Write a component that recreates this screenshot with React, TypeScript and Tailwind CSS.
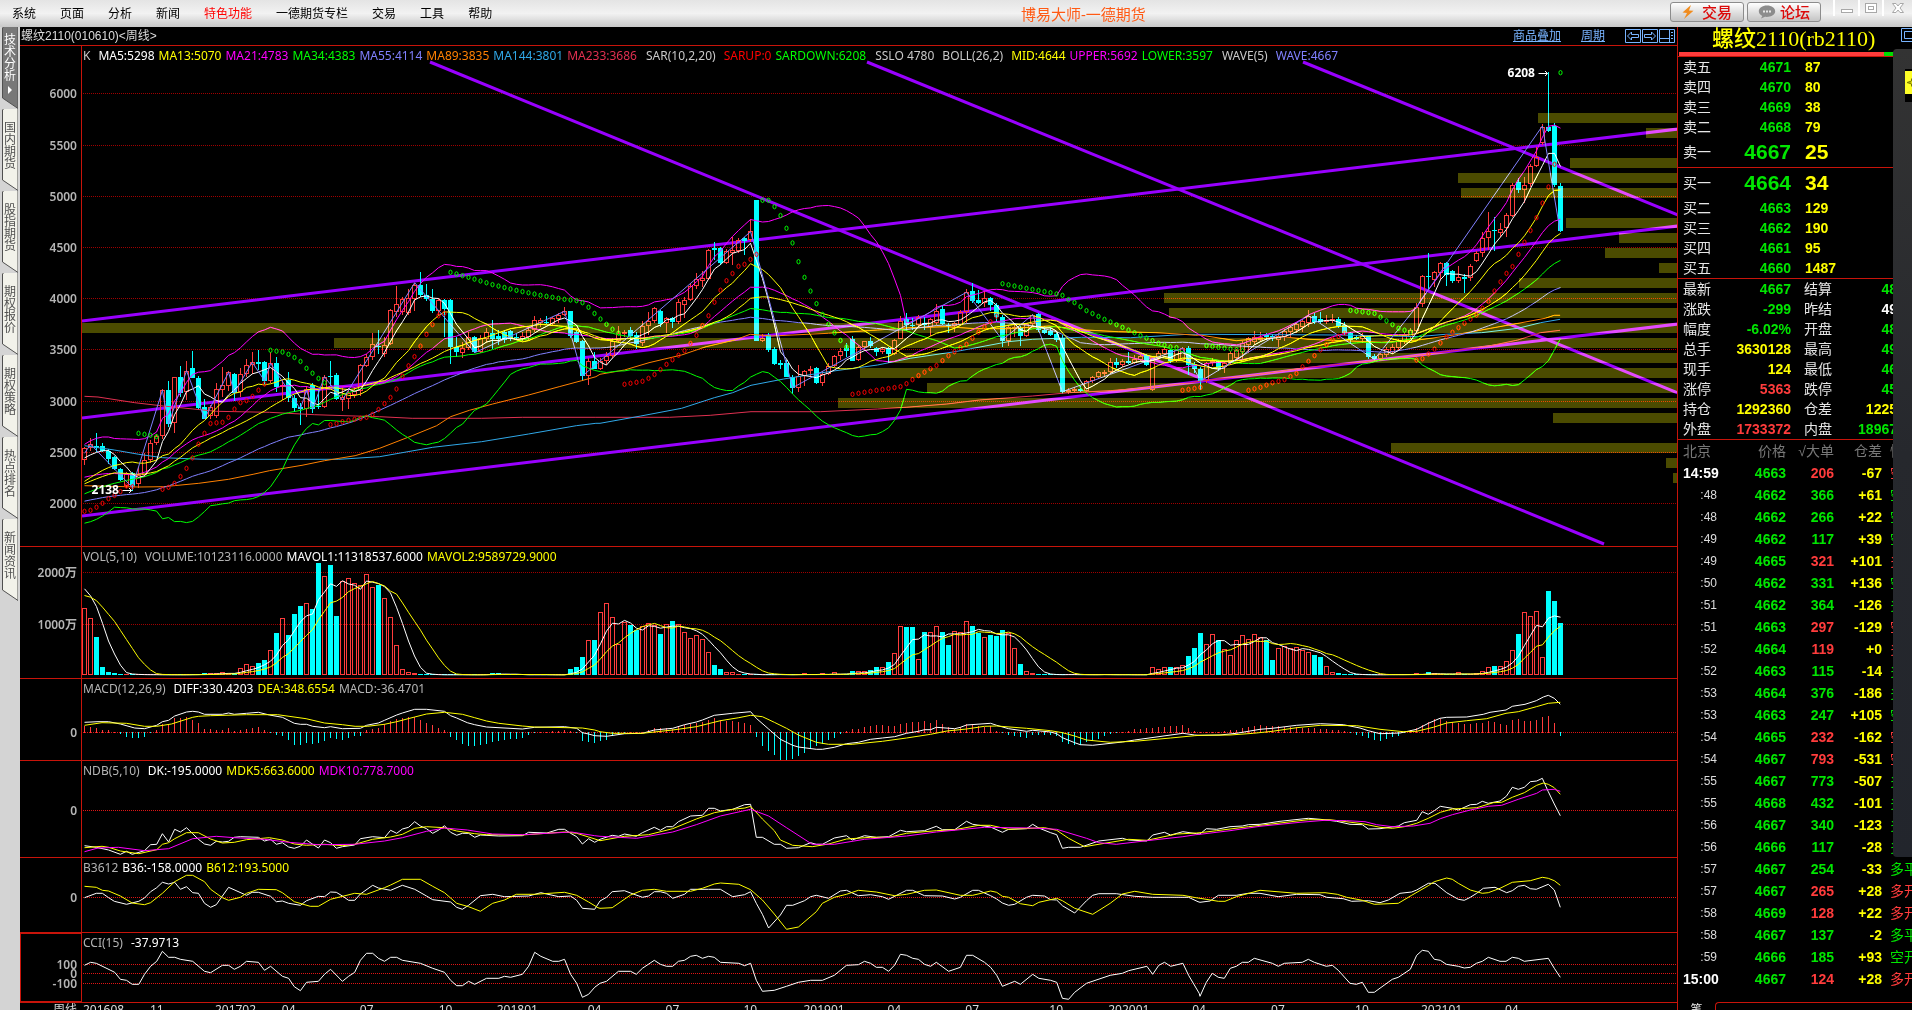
import { useState } from "react";
import type { ReactNode } from "react";

type Point = [number, number];

const menuItems = [
  { label: "系统" },
  { label: "页面" },
  { label: "分析" },
  { label: "新闻" },
  { label: "特色功能", hot: true },
  { label: "一德期货专栏" },
  { label: "交易" },
  { label: "工具" },
  { label: "帮助" },
];

const sideTabs = ["技术分析", "国内期货", "股指期货", "期权报价", "期权策略", "热点排名", "新闻资讯"];

// ---------------------------------------------------------------------------
// Series data
// ---------------------------------------------------------------------------

// Candles: direction (r = up, d = down), body top, body bottom, high, low.
// Values are thirds of a pixel below y = 280, negative ones lie above it.
const candleData = `
r,505,541,500,555 r,493,503,473,513 d,498,503,458,517 d,498,514,490,516 d,514,536,508,553 d,531,566,528,570
d,567,599,565,604 r,583,618,575,625 d,578,622,576,632 r,584,611,560,625 r,541,584,520,590 r,490,541,480,550
r,469,490,463,496 r,331,469,326,478 d,331,432,303,440 r,292,428,290,458 d,291,338,258,352 r,272,335,243,360
d,265,293,212,295 d,293,383,288,388 d,381,416,357,418 r,381,407,375,416 r,328,407,308,413 r,316,330,262,350
r,277,318,273,332 d,281,338,279,362 r,283,336,265,352 r,254,283,238,292 r,247,254,215,282 d,246,252,210,270
d,246,302,242,312 r,250,302,216,310 d,249,320,232,336 r,315,322,300,361 d,300,353,276,365 d,353,383,345,397
d,382,387,370,434 r,327,388,317,410 d,315,386,308,398 d,378,382,330,386 r,290,380,286,383 d,287,290,243,318
d,285,357,279,360 r,350,360,320,394 r,340,357,325,387 r,330,345,320,355 r,256,332,253,348 r,232,258,222,262
r,193,232,160,240 d,198,202,150,222 r,195,223,170,230 r,91,192,86,195 r,73,95,18,110 r,58,95,52,104
r,55,100,28,106 r,15,58,8,92 d,14,45,-25,52 d,45,56,13,64 d,57,93,27,100 r,61,93,55,105
d,60,88,56,170 d,60,200,56,251 d,200,216,170,231 r,203,218,186,235 r,172,203,155,210 d,171,217,168,218
r,175,217,165,219 r,157,178,143,190 d,158,176,120,206 d,168,178,150,195 d,155,180,150,188 d,153,176,150,184
d,170,174,160,180 r,168,176,155,184 r,150,170,140,180 r,121,150,108,155 r,120,130,113,140 d,125,130,108,133
r,115,132,112,135 r,104,118,98,128 r,94,104,82,108 d,94,168,92,173 d,157,186,150,188 d,183,288,180,303
r,244,288,235,314 d,243,266,215,268 r,243,266,233,270 r,228,243,215,255 r,182,228,175,235 r,158,182,138,190
r,155,162,150,170 d,150,168,140,180 d,165,192,155,208 r,137,190,122,198 r,122,137,95,165 r,85,123,82,130
d,93,131,90,140 r,115,130,110,160 d,115,125,110,143 r,67,125,57,133 r,61,75,50,115 r,17,60,10,62
r,-3,17,-22,28 r,-7,3,-28,20 r,-89,-4,-92,0 d,-95,-90,-113,-60 d,-96,-50,-100,-45 r,-87,-52,-92,-48
r,-90,-82,-130,-45 r,-120,-87,-125,-80 d,-126,-117,-130,-75 r,-146,-120,-182,-115 d,-240,182,-240,182 r,173,182,163,186
d,165,209,160,215 d,208,252,200,254 d,249,254,240,268 d,250,290,240,290 d,290,323,285,343 r,287,323,255,335
r,273,287,270,318 r,267,273,258,290 d,265,308,262,312 r,282,310,272,318 r,257,283,250,286 r,227,258,225,262
r,213,227,205,240 d,205,212,190,230 d,178,242,168,244 r,200,240,195,243 r,184,200,182,214 d,183,197,170,205
d,205,215,200,227 r,207,215,200,222 d,205,221,200,250 r,181,221,176,225 r,122,176,108,178 d,118,136,100,153
d,134,138,115,150 r,112,135,105,142 d,130,136,110,150 r,118,140,114,168 r,92,130,72,134 d,87,131,75,134
d,135,139,130,158 r,130,137,125,155 r,97,135,90,138 r,37,97,27,128 d,34,63,9,70 d,60,68,30,73
r,55,70,33,80 d,54,75,50,93 d,76,110,70,125 d,110,183,105,200 r,140,184,135,197 r,140,146,130,170
d,143,167,138,197 r,133,167,128,172 r,104,133,102,138 d,102,151,99,155 d,150,158,138,162 d,152,164,145,168
d,163,180,160,185 d,173,335,165,343 r,330,335,325,343 r,327,331,322,335 d,327,333,318,335 r,303,332,300,335
r,292,303,288,308 r,277,292,272,298 r,275,280,270,290 r,246,275,235,280 d,246,255,233,263 r,244,255,238,262
d,243,248,216,252 r,237,249,225,252 r,228,240,222,244 d,225,255,222,258 r,232,330,227,333 r,218,235,212,240
r,208,222,200,226 d,210,242,206,248 r,210,242,206,246 r,205,240,202,244 d,204,254,198,285 d,253,268,245,278
d,267,303,262,330 r,250,303,246,308 r,243,250,235,258 d,243,263,240,272 r,250,262,246,280 r,220,250,214,256
r,210,235,206,240 r,190,215,182,240 r,175,195,170,220 r,170,185,152,196 r,172,180,155,186 d,165,172,160,180
d,168,175,162,182 r,168,180,160,200 r,153,172,148,184 r,140,155,134,172 r,132,150,126,160 r,122,140,116,156
r,107,128,90,140 d,107,125,100,132 d,118,125,95,130 r,120,125,105,132 r,118,124,103,130 d,118,137,110,145
d,135,160,125,165 d,158,180,155,188 d,170,176,165,180 r,166,178,160,190 d,168,230,165,238 d,228,238,222,242
r,222,236,218,240 r,208,225,202,232 r,200,215,192,222 r,182,205,176,212 r,165,185,160,192 r,150,170,145,176
r,80,152,70,156 r,-11,73,-14,80 d,-12,-8,-80,30 r,-24,0,-28,20 r,-50,-22,-55,0 d,-50,-15,-54,18
d,-26,2,-30,10 r,-8,2,-42,10 d,-8,-4,-18,38 r,-43,-5,-48,4 r,-80,-56,-86,-54 r,-127,-80,-145,-70
r,-147,-125,-203,-90 d,-150,-147,-190,-88 r,-152,-140,-172,-130 r,-195,-157,-200,-130 r,-286,-193,-290,-188 d,-295,-270,-305,-262
r,-285,-270,-310,-230 r,-343,-288,-348,-280 r,-370,-343,-400,-338 r,-460,-412,-468,-405 d,-460,-448,-623,-445 d,-463,-285,-472,-280
d,-282,-147,-290,-145`;

const candles = candleData
  .trim()
  .split(/\s+/)
  .map((row) => {
    const [dir, top, bottom, high, low] = row.split(",");
    return { up: dir === "r", top: +top, bottom: +bottom, high: +high, low: +low };
  });

const barX = (i: number) => 82 + i * 6;
const priceY = (v: number) => 280 + v / 3;

// Volume bars, thirds of a pixel above the base line, one per candle
const volumeData = `
200 170 114 24 9 5 3 3 3 2 2 2 3 2 2 2 2 3 3 3 5 5 6 8 7 5 20 32 27 36 45 74 126 170 120 183 207 215 198 336 296 330 177
281 290 276 269 302 263 270 230 173 89 17 8 5 2 2 2 2 2 2 2 2 2 2 3 3 6 6 3 2 2 2 2 2 2 2 2 2 2 18 24 54 104 105 188 215
173 92 158 150 136 147 155 149 123 152 162 152 128 110 119 107 68 29 17 8 8 2 3 2 3 2 2 3 3 2 2 3 5 3 2 5 2 8 3 4 12 11 11 15
24 23 39 65 146 144 144 47 129 128 146 129 90 131 128 161 147 125 113 120 117 135 125 80 33 11 5 2 2 3 3 2 3 2 2 3 2 3 3 2 2
2 3 2 2 2 23 17 23 24 23 29 57 80 126 92 122 105 77 59 104 119 107 122 113 105 45 80 86 80 83 75 68 60 54 26 8 5
3 3 2 2 2 2 2 3 3 3 3 3 5 3 9 5 3 3 3 8 4 3 5 11 23 27 26 41 74 123 188 176 191 53 252 222 156`;

const volumes = volumeData.trim().split(/\s+/).map(Number);

// Bars before the first visible one, used only to start the averages
const priorCloses = [
  ...Array(21).fill(698),
  ...Array(8).fill(737),
  ...Array(5).fill(694),
  ...Array(8).fill(569),
  ...Array(8).fill(647),
  ...Array(4).fill(539),
];
const priorVolumes = [...Array(5).fill(220), ...Array(4).fill(275)];

const closes = candles.map((c) => (c.up ? c.top : c.bottom));

function average(values: number[], prior: number[], n: number) {
  const all = [...prior, ...values];
  return values.map((_, i) => {
    const end = prior.length + i + 1;
    const part = all.slice(Math.max(0, end - n), end);
    return part.reduce((a, b) => a + b, 0) / part.length;
  });
}

function deviation(values: number[], prior: number[], n: number) {
  const all = [...prior, ...values];
  const mean = average(values, prior, n);
  return values.map((_, i) => {
    const end = prior.length + i + 1;
    const part = all.slice(Math.max(0, end - n), end);
    return Math.sqrt(part.reduce((a, b) => a + (b - mean[i]) ** 2, 0) / part.length);
  });
}

const bollMid = average(closes, priorCloses, 26);
const bollDev = deviation(closes, priorCloses, 26);

// Long series are kept in strips: x origin, y origin, units per px across, units per px down
const strips: Record<string, number[]> = {
  B: [0, 280, 2.45, 3],
  C: [0, 540, 2.45, 3],
  E: [600, 280, 2.45, 3],
  G: [1200, 280, 2.202, 3],
  I: [600, 560, 2.45, 3],
  J: [1200, 560, 3, 3],
};

function trace(data: string): Point[] {
  return data.split("|").flatMap((part) => {
    const [name, ...pairs] = part.trim().split(/\s+/);
    const [x0, y0, sx, sy] = strips[name];
    return pairs.map((pair): Point => {
      const [x, y] = pair.split(",").map(Number);
      return [x0 + x / sx, y0 + y / sy];
    });
  });
}

function valueAt(points: Point[], x: number) {
  if (x <= points[0][0]) return points[0][1];
  for (let i = 1; i < points.length; i++) {
    const [x1, y1] = points[i - 1];
    const [x2, y2] = points[i];
    if (x <= x2) return x2 === x1 ? y2 : y1 + ((y2 - y1) * (x - x1)) / (x2 - x1);
  }
  return points[points.length - 1][1];
}

const ma89 = trace(
  "B 207,617 340,621 400,620 487,610 560,598 620,583 660,572 740,556 795,542 870,527 930,505 1010,467 1070,437 1104,410 1150,391 1207,372 1295,345 1370,320 1425,302 1460,290 | E 0,283 60,270 120,248 200,225 260,200 330,180 368,163 420,168 560,160 680,150 760,143 850,140 920,146 1000,146 1100,138 1190,150 1270,155 1360,158 1430,163 1460,166 | G 0,165 80,182 180,170 240,178 400,187 480,180 560,165 640,145 720,125 760,115 780,106 793,106"
);
const ma144 = trace(
  "B 207,497 280,510 340,523 398,533 500,538 700,538 830,538 930,530 1060,502 1180,485 1295,462 1412,437 1460,430 | E 0,430 100,408 200,385 280,353 325,338 370,316 450,297 560,275 680,255 760,235 870,215 1000,185 1060,178 1180,172 1300,173 1440,163 1460,163 | G 0,163 300,165 400,167 480,170 540,163 620,158 700,145 750,128 793,118"
);
const ma233 = trace(
  "B 207,349 240,351 330,368 400,378 530,394 660,397 770,404 870,408 930,410 1010,415 1180,415 1280,412 1460,412 | E 0,412 170,412 270,406 370,395 540,395 680,387 750,382 850,372 930,360 1060,348 1150,338 1250,332 1350,322 1450,308 | G 0,303 120,285 240,262 400,240 560,212 640,197 700,180 750,158 793,151"
);
const wave = trace(
  "B 207,520 222,493 324,622 398,331 413,432 457,272 501,416 560,277 574,338 618,247 648,302 663,250 736,387 751,330 766,386 795,290 839,360 1016,8 1163,218 1383,94 1427,288 | E 75,165 369,-145 472,323 898,37 986,180 1060,104 1133,335 1427,205 1472,303 | G 239,107 384,238 477,80 754,-462 793,-147"
);

const sarRuns = [
  { up: true, data: "B 207,694 222,691 236,682 251,670 266,656 281,646 295,635 310,618 324,620" },
  { up: false, data: "B 339,460 354,463 369,466 384,470" },
  { up: true, data: "B 398,628 413,622 427,611 442,590 457,565 472,533 486,493 501,460 516,430 545,427 560,412 574,388 589,368 604,362 618,350 633,331 648,312" },
  { up: false, data: "B 663,211 692,216 707,223 721,232 736,244 751,265 766,280 780,295 795,308" },
  { up: true, data: "B 810,434 824,431 839,425 854,421 898,412 913,403 927,389 942,371 957,352 972,326 986,289 1001,257 1016,229 1030,199 1045,163 1060,133 1075,106 1089,100" },
  { up: false, data: "B 1104,-23 1148,-8 1207,14 1265,31 1325,46 1383,58 1413,62 1427,68 1442,82 1457,101 1472,118 1486,133 1501,148 1516,160" },
  { up: true, data: "E 60,313 104,304 119,295 133,284 148,269 163,253 192,226 207,212 222,190 236,167 251,137 266,107 280,68 295,31 310,2 325,-20 339,-41 354,-47 369,-62 383,-77" },
  { up: false, data: "E 398,-239 413,-239 427,-221 442,-194 457,-155 472,-110 486,-56 501,-8 516,34 530,70 545,103 560,133 574,158 589,181 604,201" },
  { up: true, data: "E 618,343 677,331 736,320 751,311 780,287 810,266 824,257 854,227 883,203 898,193 927,157 957,125 972,108" },
  { up: false, data: "E 986,11 1045,25 1104,38 1133,46 1148,59 1163,68 1192,92 1236,118 1280,142 1325,167 1369,190 1398,201 1413,203" },
  { up: true, data: "E 1427,331 1472,322" },
  { up: false, data: "G 15,197 94,212" },
  { up: true, data: "G 107,331 133,322 160,308 186,299 213,280 226,260 239,244 265,210 292,178 318,160" },
  { up: false, data: "G 331,91 384,100 410,122 437,145 464,156" },
  { up: true, data: "G 477,240 490,236 516,208 543,170 582,130 609,105 622,85 635,65 648,34 662,5 675,-20 688,-40 701,-76 714,-112 728,-149 741,-187 754,-230 767,-277 780,-347" },
  { up: false, data: "G 793,-622" },
];

const sarDots = sarRuns.flatMap(({ up, data }) => {
  const points = trace(data);
  const first = Math.round((points[0][0] - 84.5) / 6);
  const last = Math.round((points[points.length - 1][0] - 84.5) / 6);
  return Array.from({ length: last - first + 1 }, (_, k) => {
    const x = 84.5 + (first + k) * 6;
    return { x, y: valueAt(points, x), up };
  });
});

const diff = trace(
  "C 207,547 240,545 266,545 295,552 330,564 354,566 384,556 398,545 413,541 428,528 457,516 472,514 486,516 501,523 545,523 560,519 574,523 604,520 633,517 660,525 692,532 721,550 736,553 751,553 766,559 795,563 810,560 839,566 883,565 898,556 927,549 942,541 972,525 986,519 1016,508 1045,508 1089,514 1104,527 1119,534 1145,548 1163,554 1192,561 1280,567 1310,562 1383,560 1413,565 1427,578 1442,582 1457,587 | I 16,529 60,521 104,520 133,510 178,505 207,494 236,486 251,480 280,466 325,460 369,455 383,475 413,507 442,538 472,556 486,561 530,568 545,568 574,562 604,551 633,547 663,538 692,534 722,530 751,520 780,514 795,509 810,509 824,502 869,506 883,502 898,495 957,490 972,496 1001,506 1045,514 1060,511 1104,516 1119,521 1133,533 1163,548 1177,554 1207,556 1280,546 1310,540 1428,520 1457,525 | J 0,526 60,525 109,520 145,514 180,508 217,505 290,496 361,491 430,494 480,504 505,512 540,521 600,519 650,508 685,490 720,475 740,472 800,471 850,463 870,457 918,450 937,439 975,433 1009,422 1030,411 1045,406 1063,415 1081,433"
);
const dea = trace(
  "C 207,556 250,548 310,550 354,559 384,559 420,552 472,532 486,529 516,527 604,524 680,524 750,536 795,549 839,554 870,559 900,559 942,553 972,545 1016,531 1045,522 1089,517 1133,523 1163,533 1192,543 1222,550 1280,558 1310,561 1427,564 1457,570 | I 0,515 30,520 104,520 178,510 236,500 295,482 340,473 369,466 398,470 427,487 457,505 486,525 530,547 560,553 618,553 692,544 751,534 810,523 850,513 898,507 942,499 972,498 1045,505 1104,512 1133,518 1163,528 1192,540 1250,547 1310,544 1398,534 1457,527 | J 0,526 90,525 160,520 217,514 290,503 361,496 470,497 540,508 610,515 650,514 700,502 740,489 800,482 860,476 918,460 955,455 1009,440 1045,430 1081,427"
);

const dk = trace(
  "C 207,917 236,922 266,930 295,943 310,934 324,943 354,932 369,914 384,913 398,881 413,906 428,868 442,876 457,863 472,881 486,898 501,912 516,916 530,904 545,906 560,904 574,892 589,890 633,892 648,903 663,898 677,913 692,908 707,921 721,925 736,919 751,900 766,913 780,924 795,900 810,908 824,925 839,920 869,915 883,896 913,890 942,893 957,871 972,880 986,867 1001,862 1016,845 1030,858 1045,866 1060,880 1075,870 1089,857 1104,877 1119,886 1133,880 1148,880 1163,892 1177,885 1222,888 1280,887 1295,877 1340,879 1369,868 1383,868 1398,880 1413,890 1427,912 1442,896 1457,907 | I 0,838 30,826 45,829 60,822 89,829 104,818 133,802 148,811 163,800 178,800 192,785 222,768 251,766 266,745 280,745 295,753 325,748 354,734 369,733 383,832 398,832 427,853 442,853 457,865 486,863 516,848 530,853 545,853 574,834 604,827 618,840 648,827 677,832 707,830 736,811 751,815 795,812 824,799 839,809 869,809 898,784 913,793 957,801 986,817 1001,808 1045,806 1060,793 1075,804 1104,818 1119,824 1133,865 1148,862 1177,862 1222,843 1280,835 1295,840 1340,843 1354,825 1383,817 1398,825 1428,815 1462,821 | J 0,822 19,806 50,808 90,800 127,798 145,794 180,793 240,784 325,775 361,778 410,784 450,793 487,794 505,807 540,806 595,798 613,788 650,781 667,755 685,763 703,752 721,739 757,745 775,750 811,734 830,733 847,724 865,730 900,723 919,709 937,682 955,688 973,682 991,665 1010,663 1027,655 1045,695 1063,732 1081,767"
);
const mdk5 = trace(
  "C 207,923 250,919 266,922 295,933 340,941 384,929 398,913 413,908 428,896 457,878 486,878 516,897 545,909 574,907 604,899 660,893 692,900 721,912 751,916 795,913 840,917 869,913 913,898 957,891 986,883 1016,865 1045,860 1089,863 1119,873 1163,881 1192,884 1280,885 1325,881 1383,876 1413,880 1442,891 1465,900 | I 0,842 60,829 119,824 178,806 236,777 280,758 325,748 355,744 369,739 398,777 427,812 442,840 472,856 520,860 560,852 604,837 663,832 707,832 751,820 824,812 869,809 928,796 957,796 1001,808 1089,803 1119,811 1148,835 1187,860 1236,850 1295,838 1340,841 1413,822 1462,819 | J 0,818 50,812 145,800 240,789 325,779 390,779 487,791 540,802 577,805 613,800 650,790 685,775 721,757 757,747 830,743 880,728 905,727 937,712 973,698 1010,676 1030,669 1045,673 1063,683 1081,703"
);
const mdk10 = trace(
  "C 207,935 240,924 290,922 354,932 413,926 472,896 530,889 574,893 648,898 707,907 780,914 869,913 942,903 986,893 1045,874 1089,864 1145,870 1207,882 1280,884 1400,876 1457,887 | I 0,829 90,835 178,816 236,794 295,768 369,748 413,768 457,803 520,853 574,853 648,838 751,828 824,816 942,802 1060,804 1119,808 1192,835 1222,848 1265,853 1340,842 1428,830 1460,824 | J 0,823 90,812 180,799 300,787 375,781 440,782 495,785 530,794 577,800 640,798 690,790 721,776 757,764 811,750 865,739 905,736 955,718 1010,700 1027,690 1063,688 1081,694"
);

const b36 = trace(
  "C 207,1073 236,1060 251,1060 266,1073 280,1084 310,1093 340,1084 354,1074 369,1055 384,1043 398,1027 413,1032 428,1027 442,1048 457,1040 472,1058 486,1060 501,1090 516,1102 530,1094 545,1068 560,1042 604,1066 618,1057 633,1057 663,1069 677,1085 692,1083 707,1090 736,1096 751,1082 780,1069 795,1070 810,1056 824,1057 839,1068 854,1081 869,1081 883,1062 913,1036 927,1044 957,1051 986,1036 1016,1048 1045,1068 1060,1079 1104,1086 1119,1102 1133,1108 1148,1096 1177,1067 1207,1063 1236,1070 1295,1068 1325,1058 1369,1070 1398,1068 1413,1081 1427,1105 1457,1108 | I 0,1023 16,1012 30,995 60,992 75,999 104,1012 119,1008 133,995 148,995 163,1000 178,1015 207,1003 222,988 266,988 295,988 325,1010 354,1004 369,995 383,1030 398,1063 413,1104 442,1065 457,1036 472,1036 501,1022 516,1010 530,1006 560,1015 589,993 604,991 633,1007 663,1004 692,1010 707,1018 751,991 766,991 795,1007 839,1008 869,1017 883,1012 913,991 927,991 957,1007 972,1017 986,1029 1001,1036 1016,1033 1045,1012 1060,1006 1089,1008 1104,1019 1119,1020 1133,1037 1163,1059 1192,1022 1207,1006 1222,1001 1265,1001 1310,1009 1354,1012 1442,1012 1465,1025 | J 0,1027 30,1023 55,1006 109,1006 145,1000 180,1000 235,1010 290,1003 360,1004 380,1012 430,1016 455,1024 505,1022 540,1028 565,1020 600,1000 635,996 650,990 685,970 705,970 740,998 775,1018 793,1021 811,1012 830,1000 850,985 885,982 920,998 937,992 955,979 973,976 991,986 1009,988 1045,973 1063,990 1081,1042"
);
const b612 = trace(
  "C 207,1039 236,1042 251,1051 266,1053 295,1068 324,1089 354,1094 369,1088 398,1060 428,1025 457,1006 472,1006 501,1025 516,1048 545,1073 560,1081 589,1072 604,1060 633,1048 677,1049 692,1058 721,1085 760,1099 780,1099 810,1078 869,1060 898,1063 942,1043 957,1035 986,1018 1030,1018 1060,1039 1089,1058 1119,1090 1148,1100 1177,1114 1207,1090 1236,1080 1265,1063 1310,1063 1383,1057 1413,1066 1442,1086 1465,1103 | I 0,1045 30,1043 75,1005 104,991 133,988 163,994 222,994 251,985 280,972 295,969 340,973 369,989 398,1020 427,1062 457,1108 486,1101 530,1055 545,1030 574,1012 604,1003 633,991 677,996 722,1007 751,1003 795,991 824,990 883,1006 913,1006 957,993 972,997 986,1009 1001,1012 1030,1031 1060,1037 1075,1027 1119,1015 1133,1022 1163,1045 1207,1063 1250,1030 1280,1002 1310,994 1354,1003 1428,1006 1460,1013 | J 0,1015 55,1024 75,1024 109,1010 180,991 290,1000 375,998 412,1003 440,1012 487,1021 523,1033 595,1030 635,1006 685,977 703,965 740,954 757,958 775,970 811,990 847,1000 865,998 900,985 937,967 991,962 1027,952 1045,955 1063,962 1081,976"
);
const cci = trace(
  "C 207,1276 222,1267 236,1270 281,1297 295,1318 310,1321 324,1333 340,1333 354,1303 369,1279 384,1264 398,1234 413,1252 428,1252 442,1258 472,1264 501,1294 516,1298 545,1276 560,1276 574,1288 589,1279 604,1264 633,1267 648,1291 663,1279 692,1309 707,1315 721,1340 736,1352 751,1327 780,1324 795,1303 810,1288 839,1324 854,1309 869,1297 883,1261 898,1240 913,1240 927,1255 942,1264 957,1252 972,1252 986,1261 1030,1270 1060,1285 1089,1297 1104,1321 1119,1337 1133,1337 1148,1324 1163,1333 1192,1315 1222,1315 1236,1309 1251,1312 1280,1303 1295,1279 1310,1237 1325,1249 1354,1264 1369,1264 1383,1258 1398,1303 1413,1330 1427,1372 1442,1363 1457,1342 | I 0,1270 16,1264 45,1234 75,1234 89,1243 104,1225 133,1201 148,1213 163,1219 178,1219 192,1204 207,1201 222,1189 236,1186 251,1195 266,1189 280,1192 295,1207 340,1210 354,1217 369,1210 383,1261 398,1294 427,1291 457,1279 486,1267 516,1261 545,1261 574,1246 604,1216 633,1214 648,1204 663,1210 677,1222 692,1222 707,1234 722,1215 736,1183 751,1186 766,1195 780,1198 795,1213 810,1219 824,1207 854,1234 883,1222 898,1186 913,1186 942,1207 957,1222 972,1246 986,1279 1016,1264 1030,1273 1060,1243 1075,1255 1104,1261 1119,1267 1133,1315 1148,1318 1163,1297 1192,1270 1250,1246 1280,1240 1295,1232 1340,1219 1354,1243 1369,1216 1383,1207 1398,1219 1428,1210 1442,1246 1468,1300 | J 0,1309 19,1267 37,1240 55,1252 73,1255 91,1225 109,1219 127,1207 145,1207 163,1195 217,1210 235,1219 253,1210 307,1207 325,1198 343,1207 379,1219 397,1216 415,1231 450,1270 469,1273 487,1267 505,1297 523,1297 577,1258 595,1252 631,1228 650,1186 667,1171 685,1174 703,1198 721,1201 739,1213 775,1219 793,1224 811,1222 829,1210 847,1204 865,1192 900,1204 918,1204 937,1192 955,1195 973,1204 1045,1195 1063,1225 1081,1252"
);

// Volume profile on the right edge: top, left
const profileBars: Point[] = [
  [113, 1538], [128, 1646], [158, 1570], [173, 1458], [188, 1461], [218, 1566], [233, 1619], [248, 1605],
  [263, 1659], [278, 1519], [293, 1164], [308, 1169], [323, 82], [338, 334], [353, 888], [368, 860],
  [383, 927], [398, 838], [413, 1553], [443, 1391], [458, 1666], [473, 1673],
];

const trendLines = [
  [82, 321, 1678, 129],
  [82, 418, 1678, 226],
  [82, 516, 1678, 324],
  [430, 62, 1604, 544],
  [867, 62, 1678, 393],
  [1303, 62, 1678, 215],
];

const timeTicks: [string, number][] = [
  ["201608", 83], ["11", 150], ["201702", 215], ["04", 282], ["07", 360], ["10", 439], ["201801", 497],
  ["04", 588], ["07", 666], ["10", 744], ["201901", 804], ["04", 888], ["07", 966], ["10", 1050],
  ["202001", 1109], ["04", 1193], ["07", 1272], ["10", 1356], ["202101", 1422], ["04", 1506],
];

// ---------------------------------------------------------------------------
// Quote data
// ---------------------------------------------------------------------------

const asks = [
  ["卖五", "4671", "87"],
  ["卖四", "4670", "80"],
  ["卖三", "4669", "38"],
  ["卖二", "4668", "79"],
  ["卖一", "4667", "25"],
];
const bids = [
  ["买一", "4664", "34"],
  ["买二", "4663", "129"],
  ["买三", "4662", "190"],
  ["买四", "4661", "95"],
  ["买五", "4660", "1487"],
];

const green = "text-[#00e600]";
const red = "text-[#ff3c3c]";
const yellow = "text-[#ffff00]";

const summary = [
  ["最新", "4667", green, "结算", "48", green],
  ["涨跌", "-299", green, "昨结", "49", "text-white"],
  ["幅度", "-6.02%", green, "开盘", "48", green],
  ["总手", "3630128", yellow, "最高", "49", green],
  ["现手", "124", yellow, "最低", "46", green],
  ["涨停", "5363", red, "跌停", "45", green],
  ["持仓", "1292360", yellow, "仓差", "1225", yellow],
  ["外盘", "1733372", red, "内盘", "18967", green],
];

const ticks = [
  ["14:59", "4663", "206", "-67", "空平"],
  [":48", "4662", "366", "+61", "空开"],
  [":48", "4662", "266", "+22", "空开"],
  [":49", "4662", "117", "+39", "空开"],
  [":49", "4665", "321", "+101", "多开"],
  [":50", "4662", "331", "+136", "空开"],
  [":51", "4662", "364", "-126", "多平"],
  [":51", "4663", "297", "-129", "空平"],
  [":52", "4664", "119", "+0", "多开"],
  [":52", "4663", "115", "-14", "多平"],
  [":53", "4664", "376", "-186", "多平"],
  [":53", "4663", "247", "+105", "空开"],
  [":54", "4665", "232", "-162", "空平"],
  [":54", "4667", "793", "-531", "空平"],
  [":55", "4667", "773", "-507", "多平"],
  [":55", "4668", "432", "-101", "多平"],
  [":56", "4667", "340", "-123", "多平"],
  [":56", "4666", "117", "-28", "多平"],
  [":57", "4667", "254", "-33", "多平"],
  [":57", "4667", "265", "+28", "多开"],
  [":58", "4669", "128", "+22", "多开"],
  [":58", "4667", "137", "-2", "多平"],
  [":59", "4666", "185", "+93", "空开"],
  ["15:00", "4667", "124", "+28", "多开"],
];

// ---------------------------------------------------------------------------
// Chart pieces
// ---------------------------------------------------------------------------

function Line({ points, color }: { points: Point[]; color: string }) {
  return (
    <polyline
      points={points.map(([x, y]) => `${x.toFixed(1)},${y.toFixed(1)}`).join(" ")}
      fill="none"
      stroke={color}
      strokeWidth="1"
    />
  );
}

function PriceLine({ values, color }: { values: number[]; color: string }) {
  return <Line points={values.map((v, i): Point => [barX(i) + 2.5, priceY(v) + 0.5])} color={color} />;
}

function GridLines({ rows, color = "#a00000" }: { rows: number[]; color?: string }) {
  return (
    <>
      {rows.map((y) => (
        <line
          key={y}
          x1="83"
          x2="1677"
          y1={y + 0.5}
          y2={y + 0.5}
          stroke={color}
          strokeDasharray="1 1"
          shapeRendering="crispEdges"
        />
      ))}
    </>
  );
}

type PaneProps = {
  top: number;
  height: number;
  axis: [string, number][];
  legend: ReactNode;
  active?: boolean;
  notes?: ReactNode;
  children: ReactNode;
};

function Pane({ top, height, axis, legend, active, notes, children }: PaneProps) {
  const at = (y: number) => `${((y - top) / height) * 100}%`;
  return (
    <section
      className="flex min-h-0 basis-0 border-b border-[#c8140a]"
      style={{ flexGrow: height }}
    >
      <div
        className={`relative w-[62px] shrink-0 border-r border-[#c8140a] ${
          active ? "outline outline-1 -outline-offset-1 outline-[#c8140a]" : ""
        }`}
      >
        {axis.map(([label, y]) => (
          <span
            key={label}
            className="absolute right-1 -translate-y-1/2 text-[12px] leading-[10px] font-semibold text-[#b4b4b4]"
            style={{ top: at(y) }}
          >
            {label}
          </span>
        ))}
      </div>
      <div className="relative min-w-0 flex-1">
        <svg
          className="absolute inset-0 h-full w-full"
          viewBox={`82 ${top} 1595 ${height}`}
          preserveAspectRatio="none"
          aria-hidden="true"
        >
          {children}
        </svg>
        <div className="relative flex gap-1 pl-px pt-[2px] text-[12px] leading-4 whitespace-pre text-[#b4b4b4]">
          {legend}
        </div>
        {notes}
      </div>
    </section>
  );
}

function PriceChart() {
  return (
    <Pane
      top={46}
      height={500}
      axis={[
        ["6000", 94], ["5500", 146], ["5000", 197], ["4500", 248], ["4000", 299],
        ["3500", 350], ["3000", 402], ["2500", 453], ["2000", 504],
      ]}
      legend={
        <>
          <span className="pr-1 text-[#c8c8c8]">K</span>
          <span className="text-white">MA5:5298</span>
          <span className="text-[#ffff00]">MA13:5070</span>
          <span className="text-[#ff00ff]">MA21:4783</span>
          <span className="text-[#00ff00]">MA34:4383</span>
          <span className="text-[#8080ff]">MA55:4114</span>
          <span className="text-[#ff8000]">MA89:3835</span>
          <span className="text-[#30a8e8]">MA144:3801</span>
          <span className="text-[#e03050]">MA233:3686</span>
          <span className="pr-1 pl-[5px] text-[#c8c8c8]">SAR(10,2,20)</span>
          <span className="text-[#ff0000]">SARUP:0</span>
          <span className="text-[#00ff00]">SARDOWN:6208</span>
          <span className="pr-1 pl-[5px] text-[#c8c8c8]">SSLO 4780</span>
          <span className="pr-1 text-[#c8c8c8]">BOLL(26,2)</span>
          <span className="text-[#ffff00]">MID:4644</span>
          <span className="text-[#ff00ff]">UPPER:5692</span>
          <span className="text-[#00ff00]">LOWER:3597</span>
          <span className="pr-1 pl-[5px] text-[#c8c8c8]">WAVE(5)</span>
          <span className="text-[#8080ff]">WAVE:4667</span>
        </>
      }
      notes={
        <>
          <span
            className="absolute flex -translate-x-full -translate-y-1/2 items-center gap-[3px] text-[12px] leading-4 font-bold text-white"
            style={{ left: `${((1549 - 82) / 1595) * 100}%`, top: `${(27 / 500) * 100}%` }}
          >
            6208
            <ArrowMark />
          </span>
          <span
            className="absolute flex -translate-x-full -translate-y-1/2 items-center gap-[3px] text-[12px] leading-4 font-bold text-white"
            style={{ left: `${((133 - 82) / 1595) * 100}%`, top: `${(444 / 500) * 100}%` }}
          >
            2138
            <ArrowMark />
          </span>
        </>
      }
    >
      <GridLines rows={[93, 145, 196, 247, 298, 349, 401, 452, 503]} />
      {trendLines.map(([x1, y1, x2, y2]) => (
        <line key={`${x1}-${y1}`} x1={x1} y1={y1} x2={x2} y2={y2} stroke="#9900ff" strokeWidth="3" />
      ))}
      {candles.map((c, i) => {
        const x = barX(i);
        const top = Math.round(priceY(c.top));
        const bottom = Math.max(top + 1, Math.round(priceY(c.bottom)));
        const high = Math.round(priceY(c.high));
        const low = Math.round(priceY(c.low));
        if (c.up) {
          return (
            <g key={i} stroke="#ff3c3c" fill="none" shapeRendering="crispEdges">
              <path d={`M${x + 2.5} ${high}V${top}M${x + 2.5} ${bottom}V${low}`} />
              <rect x={x + 0.5} y={top + 0.5} width="4" height={Math.max(1, bottom - top - 1)} />
            </g>
          );
        }
        return (
          <g key={i} fill="#00ffff" shapeRendering="crispEdges">
            <rect x={x} y={top} width="5" height={bottom - top} />
            <rect x={x + 2} y={high} width="1" height={low - high} />
          </g>
        );
      })}
      <Line points={ma233} color="#e03050" />
      <Line points={ma144} color="#30a8e8" />
      <Line points={ma89} color="#ff8000" />
      <PriceLine values={average(closes, priorCloses, 55)} color="#8080ff" />
      <PriceLine values={average(closes, priorCloses, 34)} color="#00ff00" />
      <PriceLine values={average(closes, priorCloses, 21)} color="#ff00ff" />
      <PriceLine values={average(closes, priorCloses, 13)} color="#ffff00" />
      <PriceLine values={bollMid} color="#ffff00" />
      <PriceLine values={bollMid.map((m, i) => m - 2 * bollDev[i])} color="#ff00ff" />
      <PriceLine values={bollMid.map((m, i) => m + 2 * bollDev[i])} color="#00ff00" />
      <PriceLine values={average(closes, priorCloses, 5)} color="#ffffff" />
      <Line points={wave} color="#8080ff" />
      {sarDots.map((dot) => (
        <ellipse
          key={dot.x}
          cx={dot.x}
          cy={dot.y}
          rx="1.6"
          ry="2.2"
          fill="none"
          stroke={dot.up ? "#ff0000" : "#00ff00"}
        />
      ))}
      {profileBars.map(([y, x]) => (
        <rect
          key={y}
          x={x}
          y={y}
          width={1677 - x}
          height="10"
          fill="#4b4b00"
          className="mix-blend-plus-lighter"
        />
      ))}
    </Pane>
  );
}

function ArrowMark() {
  return (
    <svg width="11" height="7" viewBox="0 0 11 7" fill="none" stroke="#ffffff" aria-hidden="true">
      <path d="M1 3.5H10M7.5 1L10 3.5L7.5 6" />
    </svg>
  );
}

function VolumeChart() {
  const base = 675;
  const line = (n: number) =>
    average(volumes, priorVolumes, n).map((v, i): Point => [barX(i) + 2.5, base + 0.5 - v / 3]);
  return (
    <Pane
      top={547}
      height={131}
      axis={[["2000万", 573], ["1000万", 625]]}
      legend={
        <>
          <span className="pr-1">VOL(5,10)</span>
          <span>VOLUME:10123116.0000</span>
          <span className="text-white">MAVOL1:11318537.6000</span>
          <span className="text-[#ffff00]">MAVOL2:9589729.9000</span>
        </>
      }
    >
      <GridLines rows={[572, 624]} />
      {volumes.map((v, i) => {
        const h = Math.max(1, Math.round(v / 3));
        const up = candles[i]?.up;
        return up && h > 1 ? (
          <rect
            key={i}
            x={barX(i) + 0.5}
            y={base - h + 0.5}
            width="4"
            height={h - 1}
            fill="none"
            stroke="#ff3c3c"
            shapeRendering="crispEdges"
          />
        ) : (
          <rect
            key={i}
            x={barX(i)}
            y={base - h}
            width="5"
            height={h}
            fill={up ? "#ff3c3c" : "#00ffff"}
            shapeRendering="crispEdges"
          />
        );
      })}
      <Line points={line(5)} color="#ffffff" />
      <Line points={line(10)} color="#ffff00" />
    </Pane>
  );
}

function MacdChart() {
  const zero = 732;
  return (
    <Pane
      top={679}
      height={81}
      axis={[["0", 733]]}
      legend={
        <>
          <span className="pr-1">MACD(12,26,9)</span>
          <span className="text-white">DIFF:330.4203</span>
          <span className="text-[#ffff00]">DEA:348.6554</span>
          <span>MACD:-36.4701</span>
        </>
      }
    >
      <GridLines rows={[zero]} color="#e01414" />
      {candles.map((_, i) => {
        const x = barX(i) + 2.5;
        const h = Math.round((valueAt(dea, x) - valueAt(diff, x)) * 2);
        return (
          <line
            key={i}
            x1={x}
            x2={x}
            y1={h >= 0 ? zero - h : zero}
            y2={h >= 0 ? zero + 1 : zero - h}
            stroke={h >= 0 ? "#ff3c3c" : "#00ffff"}
            shapeRendering="crispEdges"
          />
        );
      })}
      <Line points={diff} color="#ffffff" />
      <Line points={dea} color="#ffff00" />
    </Pane>
  );
}

function Chart() {
  return (
    <>
      <PriceChart />
      <VolumeChart />
      <MacdChart />
      <Pane
        top={761}
        height={96}
        axis={[["0", 811]]}
        legend={
          <>
            <span className="pr-1">NDB(5,10)</span>
            <span className="text-white">DK:-195.0000</span>
            <span className="text-[#ffff00]">MDK5:663.6000</span>
            <span className="text-[#ff00ff]">MDK10:778.7000</span>
          </>
        }
      >
        <GridLines rows={[810]} color="#e01414" />
        <Line points={dk} color="#ffffff" />
        <Line points={mdk5} color="#ffff00" />
        <Line points={mdk10} color="#ff00ff" />
      </Pane>
      <Pane
        top={858}
        height={74}
        axis={[["0", 898]]}
        legend={
          <>
            <span>B3612</span>
            <span className="text-white">B36:-158.0000</span>
            <span className="text-[#ffff00]">B612:193.5000</span>
          </>
        }
      >
        <GridLines rows={[897]} color="#e01414" />
        <Line points={b36} color="#ffffff" />
        <Line points={b612} color="#ffff00" />
      </Pane>
      <Pane
        top={933}
        height={69}
        active
        axis={[["100", 965], ["0", 974], ["-100", 984]]}
        legend={
          <>
            <span className="pr-1">CCI(15)</span>
            <span className="text-white">-37.9713</span>
          </>
        }
      >
        <GridLines rows={[964, 973, 983]} color="#e01414" />
        <Line points={cci} color="#ffffff" />
      </Pane>
    </>
  );
}

// ---------------------------------------------------------------------------
// Frame
// ---------------------------------------------------------------------------

function TitleBar() {
  return (
    <header className="relative flex h-[27px] shrink-0 items-center bg-linear-to-b from-[#e4e4e4] via-[#f2f2f2] to-[#c8c8c8]">
      <nav className="flex gap-6 pl-3">
        {menuItems.map(({ label, hot }) => (
          <button
            key={label}
            type="button"
            className={`text-[12px] leading-4 ${hot ? "text-[#ff0000]" : "text-black"}`}
          >
            {label}
          </button>
        ))}
      </nav>
      <h1 className="absolute left-1/2 w-[125px] translate-x-[65px] text-[15px] leading-5 whitespace-nowrap text-[#ff5a14]">
        博易大师-一德期货
      </h1>
      <div className="ml-auto flex h-full items-start">
        <div className="flex gap-[3px] pt-[2px]">
          <button
            type="button"
            className="flex h-5 w-[74px] items-center justify-center gap-2 rounded-[3px] border border-[#8c8c8c] bg-linear-to-b from-white to-[#c4c4c4] text-[15px] leading-4 font-medium text-[#dc0a0a]"
          >
            <svg width="12" height="14" viewBox="0 0 12 14" fill="#f08c1e" aria-hidden="true">
              <path d="M9 0L0.5 7.5L5 8L2 14L11.5 5.8L7 5.4Z" />
            </svg>
            交易
          </button>
          <button
            type="button"
            className="flex h-5 w-[74px] items-center justify-center gap-1 rounded-[3px] border border-[#8c8c8c] bg-linear-to-b from-white to-[#c4c4c4] text-[15px] leading-4 font-medium text-[#dc0a0a]"
          >
            <svg width="18" height="14" viewBox="0 0 18 14" aria-hidden="true">
              <path
                d="M9 0.5C4.3 0.5 0.8 3 0.8 6.2C0.8 8.2 2.2 9.9 4.3 10.9L3 13.5L7 11.8C12.7 12.4 17.2 9.8 17.2 6.2C17.2 3 13.7 0.5 9 0.5Z"
                fill="#8c8c8c"
              />
              <path d="M5 5.5h2v2H5zM8 5.5h2v2H8zM11 5.5h2v2h-2z" fill="#e6e6e6" />
            </svg>
            论坛
          </button>
        </div>
        <div className="ml-3 flex h-4 text-[#a0a0a0]">
          <button
            type="button"
            aria-label="最小化"
            className="flex w-[25px] items-center justify-center border-l-2 border-white"
          >
            <svg width="12" height="14" viewBox="0 0 12 14" fill="#ffffff" stroke="#a8a8a8">
              <rect x="0.5" y="8.5" width="11" height="3" />
            </svg>
          </button>
          <button
            type="button"
            aria-label="还原"
            className="flex w-[26px] items-center justify-center border-x-2 border-white"
          >
            <svg width="12" height="14" viewBox="0 0 12 14" fill="#ffffff" stroke="#a8a8a8">
              <rect x="0.5" y="2.5" width="11" height="9" />
              <rect x="3.5" y="5.5" width="5" height="3" />
            </svg>
          </button>
          <button type="button" aria-label="关闭" className="flex w-[28px] items-center justify-center">
            <svg width="12" height="14" viewBox="0 0 12 14" fill="#ffffff" stroke="#a8a8a8">
              <path d="M0.5 2.5H4L6 5L8 2.5H11.5L8 7L11.5 11.5H8L6 9L4 11.5H0.5L4 7Z" />
            </svg>
          </button>
        </div>
      </div>
    </header>
  );
}

function SideTabs() {
  const [active, setActive] = useState(0);
  return (
    <aside className="flex w-5 shrink-0 flex-col bg-[#d4d4d4] pl-[2px]">
      {sideTabs.map((label, i) => {
        const on = i === active;
        return (
          <button
            key={label}
            type="button"
            onClick={() => setActive(i)}
            className={`relative h-[82px] w-4 shrink-0 pb-2 ${on ? "text-white" : "text-[#505050]"}`}
          >
            <svg
              className="absolute inset-0 h-full w-full"
              viewBox="0 0 16 82"
              preserveAspectRatio="none"
              aria-hidden="true"
            >
              <path
                d="M16 -1.5H3L0.5 1V71L16 81.5Z"
                fill={on ? "#787878" : "#f2f2ea"}
                stroke="#505050"
              />
            </svg>
            <span className="relative mx-auto flex w-[14px] flex-col items-center text-[12px] leading-3">
              {[...label].map((ch) => (
                <span key={ch}>{ch}</span>
              ))}
              {on && <span className="mt-1 border-y-4 border-l-4 border-y-transparent border-l-white" />}
            </span>
          </button>
        );
      })}
    </aside>
  );
}

function ChartHeader() {
  return (
    <div className="flex h-[19px] shrink-0 items-center border-b border-[#c8140a] pl-[1px] text-[12px] leading-4">
      <h2 className="text-[#dcdcdc] [font-family:'Liberation_Sans','Noto_Sans_CJK_SC',sans-serif]">
        螺纹2110(010610)&lt;周线&gt;
      </h2>
      <div className="ml-auto flex items-center gap-5 text-[#78b4ff]">
        <a href="#overlay" className="underline">商品叠加</a>
        <a href="#period" className="underline">周期</a>
        <div className="flex pr-px">
          <button type="button" aria-label="向左">
            <svg width="17" height="14" viewBox="0 0 17 14" fill="none" stroke="currentColor">
              <path d="M0.5 0.5H15.5V13.5H0.5ZM2.5 7L6.5 3V5.5H13.5V8.5H6.5V11Z" />
            </svg>
          </button>
          <button type="button" aria-label="向右">
            <svg width="17" height="14" viewBox="0 0 17 14" fill="none" stroke="currentColor">
              <path d="M0.5 0.5H15.5V13.5H0.5ZM13.5 7L9.5 3V5.5H2.5V8.5H9.5V11Z" />
            </svg>
          </button>
          <button type="button" aria-label="布局">
            <svg width="17" height="14" viewBox="0 0 17 14" fill="none" stroke="currentColor">
              <path d="M0.5 0.5H15.5V13.5H0.5ZM10.5 0.5V13.5M0.5 9.5H10.5M12 3.5H14M12 6.5H14M12 9.5H14" />
            </svg>
          </button>
        </div>
      </div>
    </div>
  );
}

function TimeAxis() {
  return (
    <div className="flex h-[7px] shrink-0 overflow-hidden text-[12px] leading-3 text-[#dcdcdc]">
      <span className="w-[62px] shrink-0 pt-px pr-[5px] text-right">周线</span>
      <div className="flex flex-1 pt-px pl-px">
        {timeTicks.map(([label, x], i) => {
          const next = timeTicks[i + 1]?.[1] ?? 1677;
          return (
            <span key={x} style={{ width: `${((next - x) / 1595) * 100}%` }}>
              {label}
            </span>
          );
        })}
      </div>
    </div>
  );
}

function DepthTable({ rows, big }: { rows: string[][]; big: number }) {
  return (
    <table className="w-full table-fixed border-b border-[#c8140a]">
      <tbody>
        {rows.map(([label, price, volume], i) => (
          <tr key={label} className={`font-bold ${i === big ? "h-[30px] text-[21px]" : "h-5 text-[14px]"}`}>
            <th scope="row" className="w-[42px] py-0 pl-[5px] text-left text-[14px] leading-5 font-normal text-[#e6e6e6]">
              {label}
            </th>
            <td className={`w-[71px] py-0 text-right leading-5 ${green}`}>{price}</td>
            <td className={`py-0 pl-[14px] leading-5 ${yellow}`}>{volume}</td>
          </tr>
        ))}
      </tbody>
    </table>
  );
}

function QuotePanel() {
  return (
    <aside className="relative flex w-[235px] shrink-0 flex-col overflow-hidden border-l border-[#c8140a]">
      <h2 className="h-6 pl-[34px] text-[22px] leading-6 font-medium whitespace-nowrap text-[#ffff00] [font-family:'Liberation_Serif','Noto_Sans_CJK_SC',serif]">
        螺纹2110(rb2110)
      </h2>
      <div className="flex h-[6px] shrink-0 border-b border-[#c8140a] pt-px pl-px">
        <div className="w-[205px] bg-[#ff3c3c]" />
        <div className="flex-1 bg-[#00dc00]" />
      </div>
      <DepthTable rows={asks} big={4} />
      <DepthTable rows={bids} big={0} />
      <table className="w-full table-fixed border-b border-[#c8140a] text-[14px]">
        <tbody>
          {summary.map(([label, value, tone, label2, value2, tone2]) => (
            <tr key={label} className="h-5">
              <th scope="row" className="w-[42px] py-0 pl-[5px] text-left leading-5 font-normal text-[#e6e6e6]">
                {label}
              </th>
              <td className={`w-[71px] py-0 text-right leading-5 font-bold ${tone}`}>{value}</td>
              <th scope="row" className="w-[54px] py-0 pl-[13px] text-left leading-5 font-normal text-[#e6e6e6]">
                {label2}
              </th>
              <td className={`py-0 pr-[15px] text-right leading-5 font-bold ${tone2}`}>{value2}</td>
            </tr>
          ))}
        </tbody>
      </table>
      <table className="w-full table-fixed text-[14px]">
        <thead>
          <tr className="h-[22px] text-[#787878]">
            <th className="w-[42px] py-0 pl-[5px] text-left leading-5 font-normal">北京</th>
            <th className="w-[66px] py-0 text-right leading-5 font-normal">价格</th>
            <th className="w-[48px] py-0 text-right leading-5 font-normal whitespace-nowrap">√大单</th>
            <th className="w-[48px] py-0 text-right leading-5 font-normal">仓差</th>
            <th className="py-0 pl-2 text-left leading-5 font-normal whitespace-nowrap">性质</th>
          </tr>
        </thead>
        <tbody>
          {ticks.map(([time, price, size, change, kind], i) => {
            const tone = kind === "多开" || kind === "空平" ? red : green;
            const full = time.length > 3;
            return (
              <tr key={i} className="h-[22px]">
                <td className={`py-0 leading-5 ${full ? "pl-[5px] font-bold text-white" : "pr-[3px] text-right text-[12px] text-[#dcdcdc]"}`}>
                  {time}
                </td>
                <td className={`py-0 text-right leading-5 font-bold ${green}`}>{price}</td>
                <td className={`py-0 text-right leading-5 font-bold ${tone}`}>{size}</td>
                <td className={`py-0 text-right leading-5 font-bold ${yellow}`}>{change}</td>
                <td className={`py-0 pl-2 leading-5 whitespace-nowrap ${tone}`}>{kind}</td>
              </tr>
            );
          })}
        </tbody>
      </table>
      <div className="mt-auto flex h-2 shrink-0 text-[12px] leading-4 text-[#e6e6e6]">
        <button type="button" className="w-[37px]">笔</button>
        <div className="flex-1 rounded-tl-sm border-t border-l border-[#c8140a]" />
      </div>

      {/* Floating dock covering the right edge */}
      <div className="absolute top-[22px] right-0 h-[808px] w-[19px] rounded-l-sm bg-linear-to-b from-[#333333] via-[#26282d] to-[#22252c]">
        <div className="absolute top-5 right-0 h-[33px] w-[7px] bg-black pt-[2px]">
          <div className="flex h-[23px] items-center bg-[#ffff28]">
            <svg width="7" height="9" viewBox="0 0 7 9" fill="#b4b400" stroke="#787800" aria-hidden="true">
              <path d="M6.5 0.5V3L2 4.5L6.5 6V8.5" />
            </svg>
          </div>
        </div>
      </div>
      <svg
        className="absolute top-px right-0"
        width="11"
        height="14"
        viewBox="0 0 11 14"
        fill="none"
        stroke="#78b4ff"
        aria-hidden="true"
      >
        <path d="M12 0.5H0.5V13.5H12M12 3.5H3.5V10.5H12" />
      </svg>
    </aside>
  );
}

export default function App() {
  return (
    <div className="flex h-screen w-full flex-col overflow-hidden bg-black [font-family:'Noto_Sans','Noto_Sans_CJK_SC',sans-serif]">
      <TitleBar />
      <div className="flex min-h-0 flex-1">
        <SideTabs />
        <main className="flex min-w-0 flex-1 flex-col">
          <ChartHeader />
          <Chart />
          <TimeAxis />
        </main>
        <div className="flex [font-family:'Liberation_Sans','Noto_Sans_CJK_SC',sans-serif]">
          <QuotePanel />
        </div>
      </div>
    </div>
  );
}
